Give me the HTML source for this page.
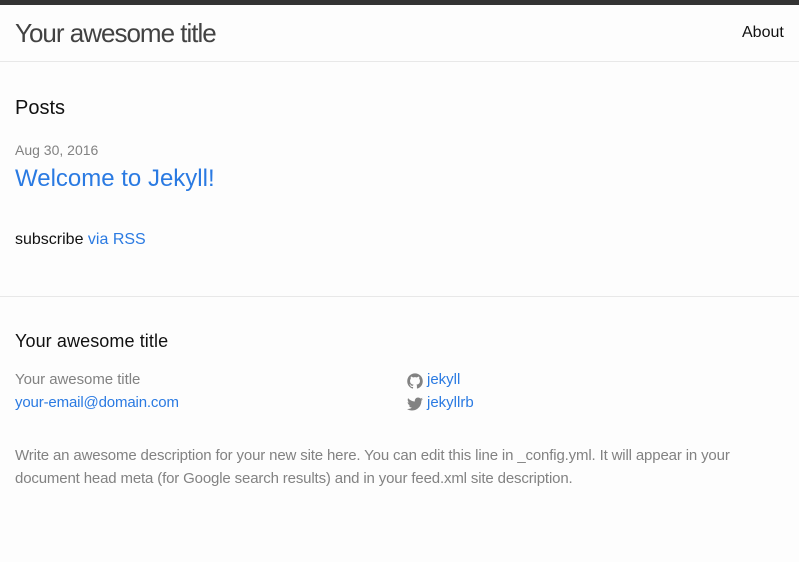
<!DOCTYPE html>
<html><head><meta charset="utf-8"><style>
body{margin:0;background:#fdfdfd;font-family:"Liberation Sans",Helvetica,Arial,sans-serif;color:#111;width:799px;height:562px;overflow:hidden;position:relative}
.a{position:absolute;white-space:nowrap}
a{color:#2a7ae2;text-decoration:none}
.top{position:absolute;left:0;top:0;width:799px;height:5px;background:#333}
.hl{position:absolute;left:0;width:799px;height:1px;background:#e8e8e8}
.g{color:#828282}
</style></head><body>
<div class="top"></div>
<div class="a" style="left:15px;top:17px;font-size:26px;letter-spacing:-1px;color:#424242;line-height:32px">Your awesome title</div>
<div class="a" style="left:742px;top:23px;font-size:16px;line-height:20px">About</div>
<div class="hl" style="top:61px"></div>
<div class="a" style="left:15px;top:96px;font-size:20px;line-height:24px">Posts</div>
<div class="a g" style="left:15px;top:141px;font-size:14px;line-height:18px">Aug 30, 2016</div>
<div class="a" style="left:15px;top:164px;font-size:24px;line-height:30px"><a href="#">Welcome to Jekyll!</a></div>
<div class="a" style="left:15px;top:230px;font-size:16px;line-height:20px">subscribe <a href="#">via RSS</a></div>
<div class="hl" style="top:296px"></div>
<div class="a" style="left:15px;top:330px;font-size:18px;line-height:22px;letter-spacing:0.1px">Your awesome title</div>
<div class="a g" style="left:15px;top:371px;font-size:15px;line-height:18px;letter-spacing:-0.05px">Your awesome title</div>
<div class="a" style="left:15px;top:394px;font-size:15px;line-height:18px;letter-spacing:-0.15px"><a href="#">your-email@domain.com</a></div>
<svg class="a" style="left:407px;top:373px" width="16" height="16" viewBox="0 0 16 16"><path fill="#828282" d="M7.999,0.431c-4.285,0-7.76,3.474-7.76,7.761c0,3.428,2.223,6.337,5.307,7.363c0.388,0.071,0.53-0.168,0.53-0.374c0-0.184-0.007-0.672-0.01-1.32c-2.159,0.469-2.614-1.04-2.614-1.04c-0.353-0.896-0.862-1.135-0.862-1.135c-0.705-0.481,0.053-0.472,0.053-0.472c0.779,0.055,1.189,0.8,1.189,0.8c0.692,1.186,1.816,0.843,2.258,0.645c0.071-0.502,0.271-0.843,0.493-1.037C4.86,11.425,3.049,10.760,3.049,7.786c0-0.847,0.302-1.54,0.799-2.082C3.768,5.507,3.501,4.718,3.924,3.65c0,0,0.652-0.209,2.134,0.796C6.677,4.273,7.34,4.187,8,4.184c0.659,0.003,1.323,0.089,1.943,0.261c1.482-1.004,2.132-0.796,2.132-0.796c0.423,1.068,0.157,1.857,0.077,2.054c0.497,0.542,0.798,1.235,0.798,2.082c0,2.981-1.814,3.637-3.543,3.829c0.279,0.24,0.527,0.713,0.527,1.437c0,1.037-0.01,1.874-0.01,2.129c0,0.208,0.14,0.449,0.534,0.373c3.081-1.028,5.302-3.935,5.302-7.362C15.76,3.906,12.285,0.431,7.999,0.431z"/></svg>
<div class="a" style="left:427px;top:371px;font-size:15px;line-height:18px"><a href="#">jekyll</a></div>
<svg class="a" style="left:407px;top:396px" width="16" height="16" viewBox="0 0 16 16"><path fill="#828282" d="M15.969,3.058c-0.586,0.26-1.217,0.436-1.878,0.515c0.675-0.405,1.194-1.045,1.438-1.809c-0.632,0.375-1.332,0.647-2.076,0.793c-0.596-0.636-1.446-1.033-2.387-1.033c-1.806,0-3.27,1.464-3.27,3.27c0,0.256,0.029,0.506,0.085,0.745C5.163,5.404,2.753,4.102,1.14,2.124C0.859,2.607,0.698,3.168,0.698,3.767c0,1.134,0.577,2.135,1.455,2.722C1.616,6.472,1.112,6.325,0.671,6.08c0,0.014,0,0.027,0,0.041c0,1.584,1.127,2.906,2.623,3.206C3.02,9.402,2.731,9.442,2.433,9.442c-0.211,0-0.416-0.021-0.615-0.059c0.416,1.299,1.624,2.245,3.055,2.271c-1.119,0.877-2.529,1.4-4.061,1.4c-0.264,0-0.524-0.015-0.78-0.046c1.447,0.928,3.166,1.469,5.013,1.469c6.015,0,9.304-4.983,9.304-9.304c0-0.142-0.003-0.283-0.009-0.423C14.976,4.29,15.531,3.714,15.969,3.058z"/></svg>
<div class="a" style="left:427px;top:394px;font-size:15px;line-height:18px"><a href="#">jekyllrb</a></div>
<div class="a g" style="left:15px;top:444px;font-size:15px;line-height:23px;letter-spacing:-0.15px;white-space:normal;width:740px">Write an awesome description for your new site here. You can edit this line in _config.yml. It will appear in your document head meta (for Google search results) and in your feed.xml site description.</div>
</body></html>
